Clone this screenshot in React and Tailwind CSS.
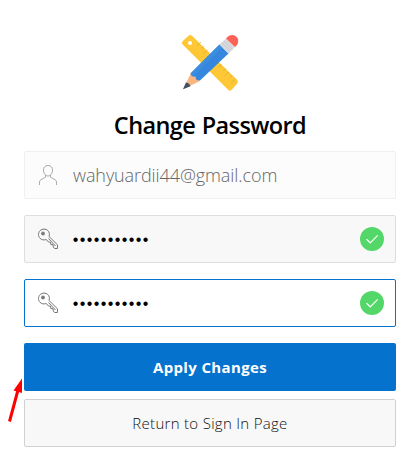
import React from "react";

function Logo() {
  return (
    <svg width="80" height="75" viewBox="0 0 80 75" className="block">
      <path d="M12.6 16.2 L18.8 10.4 Q20.5 9.2 22 10.8 L67.2 55 Q68.8 56.6 67.4 58.2 L61.6 65 Q60 66.6 58.4 65 L12.6 19.6 Q11 17.9 12.6 16.2Z" fill="#fec736" />
      <circle cx="20" cy="18" r="2" fill="#fff" />
      <path d="M31 17l-4 3.700M34 21.500l-2.300 2.100M37.500 25l-4.500 4M52 39.500l-3 2.500M56 43.500l-2.500 2.200M59 47l-4.500 4.200M62 50.500l-2.300 2.100M65.500 54l-4.500 4" stroke="#e0ae32" strokeWidth=".8" />
      <path d="M20.500 49 L13 64.300 L30 56Z" fill="#fbb57e" />
      <path d="M16 57.500 L13 64.300 L20.500 61.300 Q19.500 58 16 57.500Z" fill="#415064" />
      <path d="M49.500 19.500 L20.500 48.500 Q22 52.500 25.300 51.500 Q25.500 55.800 30 55.500 L58.500 28.500Z" fill="#3487dc" />
      <path d="M49.500 19.500 L20.500 48.500 Q21.300 50.800 23.300 51.300 L52.500 22.500Z" fill="#3b8de0" />
      <path d="M49.500 19.500 L56 13.500 L65 22 L58.500 28.500Z" fill="#d8d9dc" />
      <path d="M51.700 17.500l8.800 8.800M53.700 15.600l8.800 8.800" stroke="#c3c6cb" strokeWidth=".8" />
      <path d="M56 13.500 C60 8 66.500 9.300 68 14.200 C68.700 17.500 67.500 20 65 22Z" fill="#fb6157" />
    </svg>
  );
}

function UserIcon() {
  return (
    <svg width="20" height="22" viewBox="0 0 20 22" fill="none" stroke="#aaa" strokeWidth="1" className="block">
      <path d="M10 1.500c-3 0-4.500 2-4.500 4.500 0 3 1.700 6 4.500 6s4.500-3 4.500-6c0-2.500-1.500-4.500-4.500-4.500Z" />
      <path d="M7.500 11v2.200L3 15.700Q1.500 16.500 1.500 18v3M12.500 11v2.200l4.500 2.500q1.500.8 1.500 2.300v3" />
    </svg>
  );
}

function KeyIcon() {
  return (
    <svg width="22" height="22" viewBox="0 0 22 22" fill="none" stroke="#777" strokeWidth="1" className="block">
      <path d="M12 8.500c.8-2.300.4-4.500-1.200-6-2-1.900-5.500-1.900-7.600 0-2.200 2-2.200 5.700-.2 7.800 1.700 1.700 4 2 6.300 1.200l2.200 2.500 2 .2.300 2.300 2.200.2.300 2.300 1.200 1.500h3v-3.700L12 8.500ZM11.500 10.500l7 7.500" />
      <circle cx="6" cy="5.500" r="1.500" fill="#777" />
    </svg>
  );
}

function Check() {
  return (
    <svg width="24" height="24" viewBox="0 0 24 24" className="block">
      <circle cx="12" cy="12" r="12" fill="#53d769" />
      <path d="M6.500 12.300l3.700 3.500L17.700 8.300" fill="none" stroke="#fff" strokeWidth="1.200" />
    </svg>
  );
}

function PasswordField({ className }) {
  return (
    <div className={"flex h-12 w-full items-center rounded-[2px] border pr-[11px] pl-3 " + className}>
      <KeyIcon />
      <span className="ml-[13px] flex h-6 flex-1 items-center pt-px text-black">
        {Array.from({ length: 11 }, (_, i) => (
          <span key={i} className="flex w-[7px] justify-center font-['Liberation_Sans',sans-serif] text-[16px] leading-6">•</span>
        ))}
      </span>
      <Check />
    </div>
  );
}

export default function App() {
  return (
    <main className="flex h-[466px] w-[416px] flex-col bg-white pr-5 pl-6 font-['Open_Sans','Noto_Sans',sans-serif]">
      <div className="mt-[25px] ml-[146px]"><Logo /></div>
      <h1 className="mt-[9px] flex h-8 items-center justify-center text-[23.500px] leading-8 font-semibold tracking-[-0.6px] [word-spacing:1px] whitespace-nowrap text-black">Change Password</h1>
      <div className="mt-[10px] flex h-12 w-full items-center rounded-[2px] border border-[#f0f0f0] bg-[#fcfcfc] pl-[13px]">
        <UserIcon />
        <span className="ml-[15px] text-[18px] leading-6 font-light tracking-[-0.09px] text-[#666]">wahyuardii44@gmail.com</span>
      </div>
      <div className="mt-4 flex"><PasswordField className="border-[#dedede] bg-[#f8f8f8]" /></div>
      <div className="mt-4 flex"><PasswordField className="border-[#0572ce] bg-white" /></div>
      <div className="relative mt-4">
        <button className="flex h-12 w-full items-center justify-center rounded-[2px] bg-[#0572ce] pt-px text-[15px] font-bold tracking-[0.35px] whitespace-nowrap text-white">Apply Changes</button>
        <svg className="absolute top-[34px] -left-[18px]" width="18" height="47" viewBox="0 0 18 47">
          <path d="M3.500 44.500L12 13" stroke="#f00" strokeWidth="3" />
          <path d="M16 1.500L7.500 13.500L16 16Z" fill="#f00" />
        </svg>
      </div>
      <button className="mt-2 flex h-12 w-full items-center justify-center rounded-[2px] border border-[#d1d1d1] bg-[#f8f8f8] pt-px text-[15px] font-light tracking-[0.3px] whitespace-nowrap text-[#101010]">Return to Sign In Page</button>
    </main>
  );
}
